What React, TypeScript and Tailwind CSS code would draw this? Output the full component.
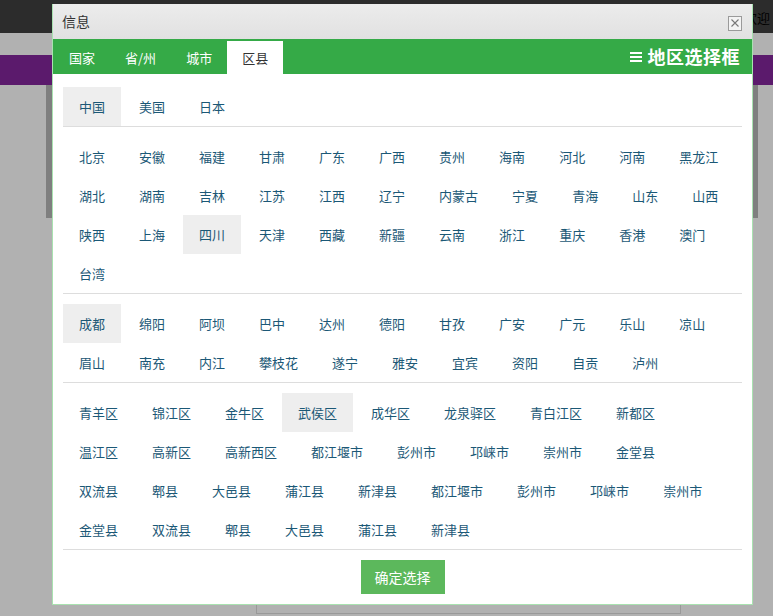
import React, { useState } from 'react';

const font = { fontFamily: '"Noto Sans CJK SC", "Liberation Sans", sans-serif' };

const countries = ['中国', '美国', '日本'];

const provinces = [
  '北京', '安徽', '福建', '甘肃', '广东', '广西', '贵州', '海南', '河北', '河南', '黑龙江',
  '湖北', '湖南', '吉林', '江苏', '江西', '辽宁', '内蒙古', '宁夏', '青海', '山东', '山西',
  '陕西', '上海', '四川', '天津', '西藏', '新疆', '云南', '浙江', '重庆', '香港', '澳门',
  '台湾',
];

const cities = [
  '成都', '绵阳', '阿坝', '巴中', '达州', '德阳', '甘孜', '广安', '广元', '乐山', '凉山',
  '眉山', '南充', '内江', '攀枝花', '遂宁', '雅安', '宜宾', '资阳', '自贡', '泸州',
];

const districts = [
  '青羊区', '锦江区', '金牛区', '武侯区', '成华区', '龙泉驿区', '青白江区', '新都区',
  '温江区', '高新区', '高新西区', '都江堰市', '彭州市', '邛崃市', '崇州市', '金堂县',
  '双流县', '郫县', '大邑县', '蒲江县', '新津县', '都江堰市', '彭州市', '邛崃市', '崇州市',
  '金堂县', '双流县', '郫县', '大邑县', '蒲江县', '新津县',
];

const tabs = ['国家', '省/州', '城市', '区县'];

interface ItemListProps {
  items: string[];
  selected: number;
  onSelect: (i: number) => void;
}

const ItemList: React.FC<ItemListProps> = ({ items, selected, onSelect }) => (
  <div className="flex flex-wrap">
    {items.map((name, i) => (
      <div
        key={name + i}
        onClick={() => onSelect(i)}
        className={`h-[39px] px-4 mr-[2px] flex items-center text-[13px] text-[#1b5876] cursor-pointer whitespace-nowrap ${
          i === selected ? 'bg-[#eeeeee]' : ''
        }`}
      >
        {name}
      </div>
    ))}
  </div>
);

const App: React.FC = () => {
  const [tab, setTab] = useState(3);
  const [country, setCountry] = useState(0);
  const [province, setProvince] = useState(24);
  const [city, setCity] = useState(0);
  const [district, setDistrict] = useState(3);

  return (
    <div className="relative w-[773px] h-[616px] overflow-hidden bg-[#b1b1b1]" style={font}>
      {/* page behind the overlay */}
      <div className="h-[33px] bg-[#2c2c2c] pl-[744px] pt-[8px] text-[13px] text-black whitespace-nowrap">
        欢迎
      </div>
      <div className="mt-[22px] h-[30px] bg-[#5b1a6c]" />
      <div className="ml-[46px] w-[712px] h-[133px] border-x-[6px] border-[#7f7f7f]" />
      <div className="mt-[300px] ml-[256px] w-[425px] h-[96px] border border-[#999999]" />

      {/* dialog */}
      <div className="absolute left-[52px] top-[4px] w-[701px] bg-white border border-t-0 border-[#a9e2b0]">
        <div className="h-[35px] flex items-center justify-between pl-[9px] pr-[10px] bg-gradient-to-b from-[#ececec] to-[#e1e1e1]">
          <span className="text-[14px] text-[#333333]">信息</span>
          <button className="w-[14px] h-[15px] border border-[#9a9a9a] bg-[#f3f3f3] flex items-center justify-center mt-[3px]">
            <svg width="10" height="10" viewBox="0 0 10 10">
              <path d="M1.5 1.5 L8.5 8.5 M8.5 1.5 L1.5 8.5" stroke="#777" strokeWidth="1.1" />
            </svg>
          </button>
        </div>

        <div className="h-[35px] bg-[#35aa47] flex items-end justify-between pr-[12px]">
          <div className="flex h-full items-end pl-[1px]">
            {tabs.map((t, i) => (
              <div
                key={t}
                onClick={() => setTab(i)}
                className={`h-[33px] px-[15px] flex items-center text-[13px] cursor-pointer whitespace-nowrap ${
                  i === tab ? 'bg-white text-[#333333]' : 'text-white'
                }`}
              >
                {t}
              </div>
            ))}
          </div>
          <div className="h-full flex items-center gap-[6px] text-white">
            <svg width="12" height="11" viewBox="0 0 12 11">
              <rect x="0" y="1" width="12" height="2" fill="#fff" />
              <rect x="0" y="5" width="12" height="2" fill="#fff" />
              <rect x="0" y="9" width="12" height="2" fill="#fff" />
            </svg>
            <span className="text-[18px] font-bold tracking-[0.5px]">地区选择框</span>
          </div>
        </div>

        <div className="px-[10px] pt-[13px] pb-[10px]">
          <div className="border-b border-[#dddddd]">
            <ItemList items={countries} selected={country} onSelect={setCountry} />
          </div>
          <div className="pt-[10px] border-b border-[#dddddd]">
            <ItemList items={provinces} selected={province} onSelect={setProvince} />
          </div>
          <div className="pt-[10px] border-b border-[#dddddd]">
            <ItemList items={cities} selected={city} onSelect={setCity} />
          </div>
          <div className="pt-[10px] border-b border-[#dddddd]">
            <ItemList items={districts} selected={district} onSelect={setDistrict} />
          </div>
          <div className="pt-[10px] flex justify-center">
            <button className="h-[34px] px-[14px] bg-[#5cb85c] text-white text-[14px]">确定选择</button>
          </div>
        </div>
      </div>
    </div>
  );
};

export default App;
